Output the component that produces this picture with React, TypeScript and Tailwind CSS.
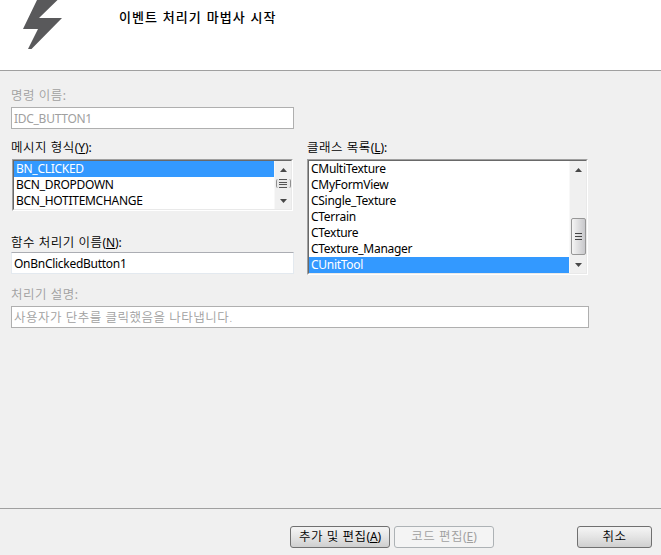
import React from "react";

const messageTypes = [
  { name: "BN_CLICKED", className: "bg-[#3399ff] text-white" },
  { name: "BCN_DROPDOWN", className: "" },
  { name: "BCN_HOTITEMCHANGE", className: "" },
];

const classes = [
  { name: "CMultiTexture", className: "" },
  { name: "CMyFormView", className: "" },
  { name: "CSingle_Texture", className: "" },
  { name: "CTerrain", className: "" },
  { name: "CTexture", className: "" },
  { name: "CTexture_Manager", className: "" },
  { name: "CUnitTool", className: "bg-[#3399ff] text-white" },
];

const Arrow = ({ className }: { className: string }) => (
  <svg width="7" height="4" viewBox="0 0 7 4" className={`shrink-0 ${className}`}>
    <path d="M3.5 0L7 4H0z" fill="#484848" />
  </svg>
);

// Korean caption, with an optional accelerator key in brackets
const Caption = ({ text, accel, colon }: { text: string; accel?: string; colon?: boolean }) => (
  <span className="text-[12px] tracking-[-0.1px]">
    <span className="text-[12.5px] font-[350] tracking-[0.5px]">{text}</span>
    {accel && (
      <>
        (<u>{accel}</u>)
      </>
    )}
    {colon && ":"}
  </span>
);

const ListBox = ({
  items,
  className,
  children,
}: {
  items: { name: string; className: string }[];
  className: string;
  children: React.ReactNode;
}) => (
  <div
    className={`border border-t-[#a0a0a0] border-l-[#a0a0a0] border-r-white border-b-white ${className}`}
  >
    <div className="flex h-full border border-t-[#696969] border-l-[#696969] border-r-[#e9e9e9] border-b-[#e9e9e9] bg-white">
      <ul className="w-[260px]">
        {items.map((item) => (
          <li key={item.name} className={`h-4 pl-[2px] leading-4 ${item.className}`}>
            {item.name}
          </li>
        ))}
      </ul>
      <div className="flex flex-1 flex-col items-center border-l border-[#f8f8f8] bg-[#f0f0f0]">{children}</div>
    </div>
  </div>
);

const App = () => {
  return (
    <div className="flex h-[555px] w-[661px] flex-col overflow-hidden bg-[#f0f0f0] font-['Noto_Sans','Noto_Sans_CJK_KR',sans-serif] text-[12px] leading-4 tracking-[-0.28px] text-black">
      <header className="flex h-[71px] border-b border-[#a0a0a0] bg-white">
        <svg width="80" height="60" viewBox="0 0 80 60" className="shrink-0">
          <path d="M37 0H57.5L39 18H62L31.5 49H28L38 29H23z" fill="#59595b" />
        </svg>
        <h1 className="mt-[9px] ml-[39px] text-[13px] font-medium tracking-[1px] [word-spacing:0.6px]">
          이벤트 처리기 마법사 시작
        </h1>
      </header>

      <main className="flex h-[438px] flex-col border-b border-[#a0a0a0] pt-[17px] pl-[11px]">
        <div className="h-4 text-[#a0a0a0]">
          <Caption text="명령 이름" colon />
        </div>
        <div className="mt-[3px] h-[22px] w-[283px] border border-[#afafaf] bg-white pt-[3px] pl-[2px] text-[#a0a0a0]">
          IDC_BUTTON1
        </div>

        <div className="flex">
          <div className="w-[296px]">
            <div className="mt-[11px] h-4">
              <Caption text="메시지 형식" accel="Y" colon />
            </div>
            <ListBox items={messageTypes} className="mt-[3px] ml-px h-[52px] w-[281px]">
              <Arrow className="mt-[7px]" />
              <div className="mt-[7px] flex h-[9px] w-[15px] flex-col items-center justify-between rounded-[2px] border-x border-[#909090] bg-[#e8e8e8]">
                <i className="h-px w-2 bg-[#555]" />
                <i className="h-px w-2 bg-[#555]" />
                <i className="h-px w-2 bg-[#555]" />
                <i className="h-px w-2 bg-[#555]" />
              </div>
              <Arrow className="mt-[11px] rotate-180" />
            </ListBox>
            <div className="mt-[24px] h-4">
              <Caption text="함수 처리기 이름" accel="N" colon />
            </div>
            <div className="mt-px h-[22px] w-[283px] border border-[#e3e9ef] border-t-[#abadb3] bg-white pt-[3px] pl-[2px]">
              OnBnClickedButton1
            </div>
          </div>

          <div>
            <div className="mt-[11px] h-4">
              <Caption text="클래스 목록" accel="L" colon />
            </div>
            <ListBox items={classes} className="mt-[3px] h-[116px] w-[281px]">
              <Arrow className="mt-[7px]" />
              <div className="mt-[46px] flex h-[37px] w-[15px] shrink-0 flex-col items-center justify-center gap-[2px] rounded-[2px] border border-[#979797] bg-linear-to-r from-[#f5f5f5] to-[#c8c8cb]">
                <i className="h-px w-[7px] bg-[#444]" />
                <i className="h-px w-[7px] bg-[#444]" />
                <i className="h-px w-[7px] bg-[#444]" />
              </div>
              <Arrow className="mt-2 rotate-180" />
            </ListBox>
          </div>
        </div>

        <div className="mt-[12px] h-4 text-[#a0a0a0]">
          <Caption text="처리기 설명" colon />
        </div>
        <div className="mt-[3px] h-[22px] w-[578px] border border-[#afafaf] bg-white pt-[3px] pl-[2px] text-[#a0a0a0]">
          <Caption text="사용자가 단추를 클릭했음을 나타냅니다." />
        </div>
      </main>

      <footer className="flex pt-[17px] pl-[290px]">
        <button className="h-[22px] w-[100px] rounded-[3px] border border-[#707070] bg-linear-to-b from-[#f2f2f2] from-10% via-[#e4e4e4] to-[#cfcfcf]">
          <Caption text="추가 및 편집" accel="A" />
        </button>
        <button className="ml-1 h-[22px] w-[100px] rounded-[3px] border border-[#adb2b5] bg-[#f4f4f4] text-[#a0a0a0]">
          <Caption text="코드 편집" accel="E" />
        </button>
        <button className="ml-[83px] h-[22px] w-[75px] rounded-[3px] border border-[#707070] bg-linear-to-b from-[#f2f2f2] from-10% via-[#e4e4e4] to-[#cfcfcf]">
          <Caption text="취소" />
        </button>
      </footer>
    </div>
  );
};

export default App;
